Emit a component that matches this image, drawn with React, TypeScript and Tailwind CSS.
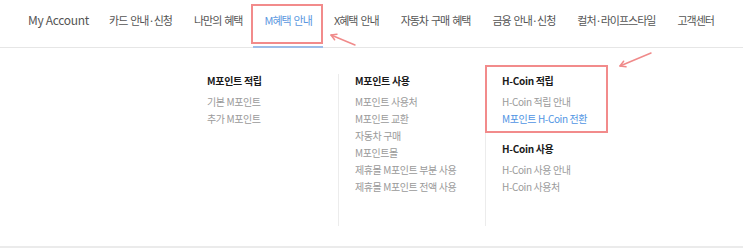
import React from "react";

const navItems = [
  "My Account",
  "카드 안내·신청",
  "나만의 혜택",
  "M혜택 안내",
  "X혜택 안내",
  "자동차 구매 혜택",
  "금융 안내·신청",
  "컬처·라이프스타일",
  "고객센터",
];

type Group = { title: string; items: { label: string; active?: boolean }[] };

const columns: Group[][] = [
  [{ title: "M포인트 적립", items: [{ label: "기본 M포인트" }, { label: "추가 M포인트" }] }],
  [
    {
      title: "M포인트 사용",
      items: [
        { label: "M포인트 사용처" },
        { label: "M포인트 교환" },
        { label: "자동차 구매" },
        { label: "M포인트몰" },
        { label: "제휴몰 M포인트 부분 사용" },
        { label: "제휴몰 M포인트 전액 사용" },
      ],
    },
  ],
  [
    {
      title: "H-Coin 적립",
      items: [{ label: "H-Coin 적립 안내" }, { label: "M포인트 H-Coin 전환", active: true }],
    },
    { title: "H-Coin 사용", items: [{ label: "H-Coin 사용 안내" }, { label: "H-Coin 사용처" }] },
  ],
];

export default function App() {
  return (
    <div
      className="relative w-[743px] h-[248px] bg-white overflow-hidden"
      style={{ fontFamily: '"Noto Sans CJK KR", "Noto Sans", sans-serif' }}
    >
      <nav className="flex h-[48px] pl-[17px] border-b border-[#e6e6e6]">
        {navItems.map((item, i) => {
          const active = item === "M혜택 안내";
          return (
            <div
              key={item}
              className={`relative h-full whitespace-nowrap pt-[12px] leading-[16px] ${
                i === 0
                  ? "pl-[11px] pr-[9px] text-[12px] tracking-[-0.3px]"
                  : "px-[11px] text-[11px] tracking-[-1px] [word-spacing:1.5px]"
              } ${active ? "text-[#5b97e0]" : "text-[#555555]"}`}
            >
              {item}
              {active && (
                <span className="absolute left-0 right-0 bottom-[-1px] h-[2px] bg-[#9dbde9]" />
              )}
            </div>
          );
        })}
      </nav>

      <div className="h-[200px] border-b-2 border-[#ebebeb] pl-[191px] pt-[26px]">
        <div className="flex h-[152px]">
          {columns.map((groups, ci) => (
            <div
              key={ci}
              className={`w-[147px] pl-[16px] ${ci > 0 ? "border-l border-[#ececec]" : ""}`}
            >
              {groups.map((g, gi) => (
                <div key={g.title} className={gi > 0 ? "mt-[15px]" : ""}>
                  <div className="text-[10px] leading-[13px] font-bold text-[#1a1a1a] tracking-[-0.3px] mb-[6px]">
                    {g.title}
                  </div>
                  {g.items.map((it) => (
                    <div
                      key={it.label}
                      className={`text-[10px] leading-[17px] tracking-[-0.4px] whitespace-nowrap ${
                        it.active ? "text-[#4f94e3]" : "text-[#9a9a9a]"
                      }`}
                    >
                      {it.label}
                    </div>
                  ))}
                </div>
              ))}
            </div>
          ))}
        </div>
      </div>

      {/* annotation boxes */}
      <div className="absolute left-[251px] top-[4px] w-[72px] h-[40px] border-2 border-[#f28b8b]" />
      <div className="absolute left-[485px] top-[65px] w-[123px] h-[68px] border-2 border-[#f28b8b]" />

      {/* annotation arrows */}
      <svg className="absolute left-0 top-0" width="743" height="248" viewBox="0 0 743 248" fill="none">
        <g stroke="#f08a8a" strokeWidth="1.5" strokeLinecap="round" strokeLinejoin="round">
          <line x1="355" y1="45" x2="331" y2="35" />
          <polyline points="334.6,39.8 331,35 337,34.2" />
          <line x1="651" y1="53" x2="620" y2="66" />
          <polyline points="626,66.8 620,66 623.6,61.2" />
        </g>
      </svg>
    </div>
  );
}
